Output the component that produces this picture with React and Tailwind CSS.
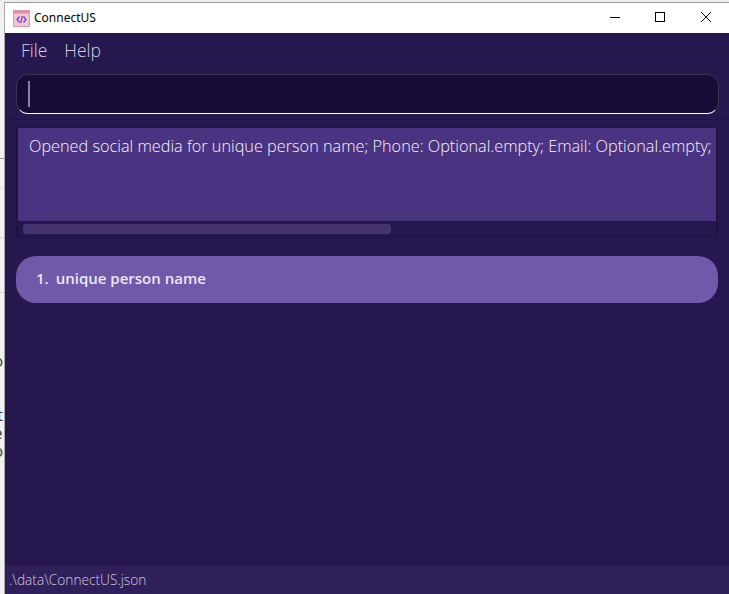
export default function App() {
  return (
    <div className="flex h-[594px] w-[729px] flex-col overflow-hidden bg-[#f1f1f1]" style={{ fontFamily: '"Open Sans", sans-serif' }}>
      <div className="h-[2px] shrink-0 bg-[#ececec]" />
      <div className="flex min-h-0 flex-1">
        <div className="relative w-[4px] shrink-0 overflow-hidden bg-[#f1f1f1] text-[#444]">
          <div className="absolute left-0 top-[156px] h-px w-[4px] bg-[#9a9a9a]" />
          <div className="absolute left-0 top-[186px] h-px w-[4px] bg-[#e2e2e2]" />
          <div className="absolute left-0 top-[235px] h-px w-[4px] bg-[#d4d4d4]" />
          <div className="absolute left-0 top-[290px] h-px w-[4px] bg-[#d4d4d4]" />
          <span className="absolute left-[-7px] top-[351px] text-[17px] leading-[16px]">o</span>
          <span className="absolute left-[-7px] top-[370px] text-[15px] leading-[16px] text-[#888]">s</span>
          <span className="absolute left-[-3px] top-[405px] text-[17px] leading-[16px]">t</span>
          <span className="absolute left-[-7px] top-[423px] text-[17px] leading-[16px]">e</span>
          <span className="absolute left-[-7px] top-[441px] text-[17px] leading-[16px]">o</span>
        </div>
        <div className="flex min-w-0 flex-1 flex-col border-l border-[#a8a8a8]">
          <div className="h-px shrink-0 bg-[#9c9c9c]" />
          <div className="flex h-[30px] shrink-0 items-center bg-white pl-[8px]">
            <svg width="17" height="17" viewBox="0 0 17 17" className="shrink-0">
              <rect x="0.5" y="0.5" width="16" height="16" fill="#f3c6d3" stroke="#d99aae" />
              <rect x="1" y="1" width="15" height="2.5" fill="#e88a9f" />
              <path d="M6.500 6.500 4 9.500l2.500 3M10.500 6.500l2.500 3-2.500 3M9.300 6 7.700 13" fill="none" stroke="#6d3fd0" strokeWidth="1.200" />
            </svg>
            <span className="ml-[4px] text-[12px] text-black" style={{ fontFamily: '"Noto Sans", sans-serif' }}>ConnectUS</span>
            <div className="ml-auto flex -translate-y-px items-center">
              <svg width="12" height="12" viewBox="0 0 12 12" className="mr-[33px]"><path d="M1 6.500h10" stroke="#000" /></svg>
              <svg width="12" height="12" viewBox="0 0 12 12" className="mr-[34px]"><rect x="1.500" y="1.500" width="9" height="9" fill="none" stroke="#000" /></svg>
              <svg width="12" height="12" viewBox="0 0 12 12" className="mr-[17px]"><path d="M1 1l10 10M11 1 1 11" stroke="#000" /></svg>
            </div>
          </div>
          <div className="flex h-[36px] shrink-0 items-center gap-[17px] border-b border-[#1f1545] bg-[#26184f] pb-[1px] pl-[16px] text-[17.500px] font-light text-[#d4cde4]">
            <span>File</span>
            <span>Help</span>
          </div>
          <div className="h-[51px] shrink-0 border-b border-[#1e1342] bg-[#26184f] pl-[11px] pr-[10px] pt-[5px]">
            <div className="flex h-[40px] items-center rounded-[12px] border border-[#3a3350] border-b-white bg-[#180b38] pl-[11px]">
              <div className="h-[26px] w-[2px] bg-[#8a84a0]" />
            </div>
          </div>
          <div className="h-[126px] shrink-0 border-b border-[#1e1342] bg-[#26184f] pl-[11px] pr-[11px] pt-[7px]">
            <div className="flex h-[111px] flex-col border border-x-2 border-[#20143f] bg-[#23174b]">
              <div className="h-[93px] overflow-hidden whitespace-nowrap bg-[#4a3380] pl-[11px] pt-[6px] text-[16.250px] font-light text-[#f6f3fc]">
                Opened social media for unique person name; Phone: Optional.empty; Email: Optional.empty;
              </div>
              <div className="pl-[5px] pt-[3px]">
                <div className="h-[10px] w-[368px] rounded-[3px] bg-[#44336f]" />
              </div>
            </div>
          </div>
          <div className="flex-1 bg-[#26184f] pl-[11px] pr-[11px] pt-[10px]">
            <div className="flex h-[47px] items-center rounded-[20px] bg-[#7059a8] pb-[2px] pl-[20px] text-[15px] font-semibold text-[#ebe6f5]">
              <span>1.</span>
              <span className="ml-[7px]">unique person name</span>
            </div>
          </div>
          <div className="flex h-[29px] shrink-0 items-center bg-[#2f205c] pl-[4px] pt-[1px] text-[13.700px] font-light text-[#cfc8e0]">
            .\data\ConnectUS.json
          </div>
        </div>
      </div>
    </div>
  );
}
